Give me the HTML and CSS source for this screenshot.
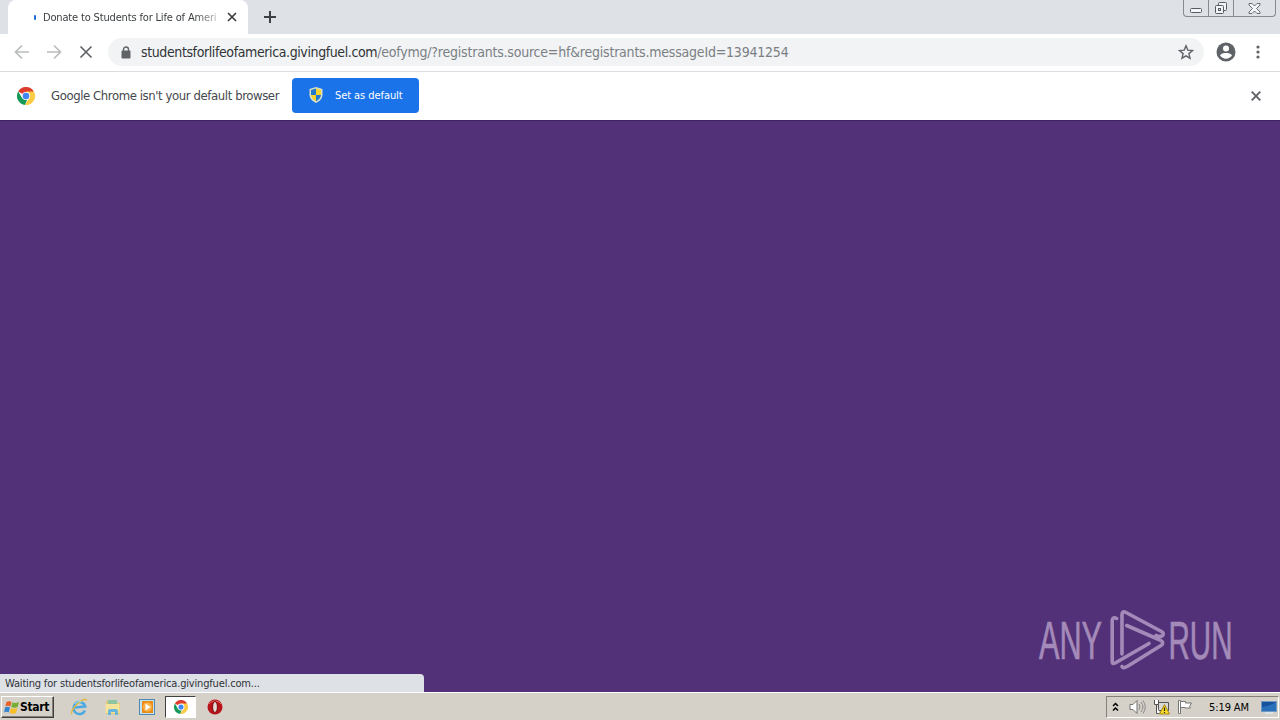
FILE: index.html
```html
<!DOCTYPE html>
<html lang="en">
<head>
<meta charset="utf-8">
<title>Donate to Students for Life of America</title>
<link rel="stylesheet" href="styles.css">
</head>
<body>
<div class="screen">
  <header class="tabstrip">
    <div class="tab">
      <i class="spinner"></i>
      <span class="tab-title">Donate to Students for Life of Ameri</span>
      <svg class="tab-close" width="10" height="10" viewBox="0 0 10 10"><path d="M1 1l8 8M9 1l-8 8" stroke="#3c4043" stroke-width="1.7"/></svg>
    </div>
    <svg class="new-tab" width="12" height="12" viewBox="0 0 12 12"><path d="M6 0v12M0 6h12" stroke="#3c4043" stroke-width="2"/></svg>
    <div class="caption-buttons">
      <span class="cap min"><svg width="12" height="5" viewBox="0 0 12 5"><rect x=".5" y=".5" width="11" height="4" rx="1" fill="#f5f6f8" stroke="#555b63"/></svg></span>
      <span class="cap restore"><svg width="14" height="14" viewBox="0 0 14 14"><g fill="#f2f3f5" stroke="#555b63"><rect x="4.500" y="1.500" width="8" height="8" rx="1"/><rect x="1.500" y="4.500" width="8" height="8" rx="1"/><rect x="4.500" y="7.500" width="2" height="2"/></g></svg></span>
      <span class="cap close"><svg width="13" height="11" viewBox="0 0 13 11"><path d="M1 .5h3l2.500 2.500L9 .5h3v1.500L8.500 5.500 12 9v1.500H9L6.500 8 4 10.500H1V9l3.500-3.500L1 2z" fill="#f5f6f8" stroke="#666c74"/></svg></span>
    </div>
  </header>

  <nav class="toolbar">
    <svg class="nav-icon" width="16" height="16" viewBox="0 0 16 16"><path d="M15 8H2M8 1.500L1.500 8 8 14.500" fill="none" stroke="#babcbe" stroke-width="1.700"/></svg>
    <svg class="nav-icon" width="16" height="16" viewBox="0 0 16 16"><path d="M1 8h13M8 1.500L14.500 8 8 14.500" fill="none" stroke="#babcbe" stroke-width="1.700"/></svg>
    <svg class="nav-icon" width="16" height="16" viewBox="0 0 16 16"><path d="M2.500 2.500l11 11M13.500 2.500l-11 11" stroke="#5f6368" stroke-width="1.700"/></svg>
    <div class="omnibox">
      <svg class="lock" width="10" height="13" viewBox="0 0 10 13"><path d="M2.500 6V3.500a2.500 2.500 0 0 1 5 0V6" fill="none" stroke="#5f6368" stroke-width="1.400"/><rect x=".5" y="4.500" width="9" height="8" rx="1" fill="#5f6368"/></svg>
      <span class="url"><span class="host">studentsforlifeofamerica.givingfuel.com</span><span class="path">/eofymg/?registrants.source=hf&amp;registrants.messageId=13941254</span></span>
      <svg class="star" width="16" height="16" viewBox="0 0 16 16"><path d="M8 1.800l1.800 4.300 4.700.4-3.600 3.100 1.100 4.600L8 11.800l-4 2.400 1.100-4.600L1.500 6.500l4.700-.4z" fill="none" stroke="#5f6368" stroke-width="1.400"/></svg>
    </div>
    <svg class="avatar" width="20" height="20" viewBox="0 0 20 20"><circle cx="10" cy="10" r="9.500" fill="#5f6368"/><circle cx="10" cy="6.500" r="3" fill="#fff"/><path d="M4 13.500c1-2 3.500-2.500 6-2.500s5 .5 6 2.500c-1.300 2-3.500 3.200-6 3.200s-4.700-1.200-6-3.200z" fill="#fff"/></svg>
    <svg class="menu" width="4" height="14" viewBox="0 0 4 14"><g fill="#5f6368"><circle cx="2" cy="2" r="1.600"/><circle cx="2" cy="7" r="1.600"/><circle cx="2" cy="12" r="1.600"/></g></svg>
  </nav>

  <section class="infobar">
    <svg class="chrome" width="18" height="18" viewBox="0 0 18 18"><path d="M1.200 4.500A9 9 0 0 1 16.800 4.500L9 9z" fill="#dd3b2d"/><path d="M1.200 4.500L5.300 11.500 9 9l1 4-2 5A9 9 0 0 1 1.200 4.500z" fill="#159957"/><path d="M16.800 4.500A9 9 0 0 1 8 18l4.200-7L9 9V4.500z" fill="#fbcb43"/><circle cx="9" cy="9" r="4.100" fill="#fff"/><circle cx="9" cy="9" r="3.300" fill="#4285f4"/></svg>
    <span class="info-text">Google Chrome isn't your default browser</span>
    <button class="set-default">
      <svg width="14" height="16" viewBox="0 0 14 16"><path d="M7 0l6.500 2v5.500C13.500 11.500 10.500 14.500 7 16 3.500 14.500.5 11.500.5 7.500V2z" fill="#d8dfc9"/><path d="M7 1.500V8H2V3z" fill="#2379ce"/><path d="M7 1.500L12 3v5H7z" fill="#f6d32f"/><path d="M2 8h5v6.300C4 12.800 2.200 10.500 2 8z" fill="#f6d32f"/><path d="M7 8h5c-.2 2.500-2 4.800-5 6.300z" fill="#2379ce"/></svg>
      <span>Set as default</span>
    </button>
    <svg class="info-close" width="10" height="10" viewBox="0 0 10 10"><path d="M.7.7l8.600 8.600M9.300.7L.7 9.300" stroke="#5f6368" stroke-width="1.900"/></svg>
  </section>

  <main class="page">
    <div class="status"><span>Waiting for studentsforlifeofamerica.givingfuel.com...</span></div>
    <svg class="watermark" width="204" height="64" viewBox="0 0 204 64">
      <g class="mark-text"><text x="4" y="51" textLength="63" lengthAdjust="spacingAndGlyphs">ANY</text><text x="133.500" y="51" textLength="64" lengthAdjust="spacingAndGlyphs">RUN</text></g>
      <g fill="none" stroke="#a48ab9" stroke-width="3.600" stroke-linecap="round" stroke-linejoin="round"><path d="M81.700 10.500q-4-2-4.500 2v41q0 3 3 1.500L114 35.500"/><path d="M87 46V6.500q0-4 4-2l35.500 19q3 2 1 4-2 2-6.500 0"/><path d="M91.700 17.500L125 32q5 2.500 1 5.500L93 58q-5 3-6 .5"/></g>
    </svg>
  </main>

  <footer class="taskbar">
    <button class="start"><svg width="16" height="15" viewBox="0 0 16 15"><path d="M2.500 2Q5 .5 7.500 2L6.300 6.500Q4 5 1.300 6.500z" fill="#e76025"/><path d="M8.500 2.300Q11 4 15 2L13.600 7Q10 8.500 7.300 6.800z" fill="#76af32"/><path d="M1 7.500Q3.500 6 6 7.500L4.700 12.500Q2 11 0 12.500z" fill="#3484ce"/><path d="M7 8Q10 9.500 13.300 8L12 13Q8.500 14.500 5.700 13z" fill="#f6bf25"/></svg><span>Start</span></button>
    <span class="app"><svg width="18" height="18" viewBox="0 0 18 18"><path d="M15 12.500A6 6 0 1 1 15.300 8.500L5 9.500" fill="none" stroke="#49a9e0" stroke-width="2.500"/><path d="M2 16C-1 13 12-1 17 2" fill="none" stroke="#e4b83b" stroke-width="1.400"/><path d="M5 6q3-4 7-2" stroke="#9be0fa" fill="none"/></svg></span>
    <span class="app"><svg width="18" height="18" viewBox="0 0 18 18"><path d="M2 3h5l1 2h8v11H2z" fill="#e3c774"/><path d="M4 2h9v5H4z" fill="#8cc5a0"/><path d="M1.500 6h14v9h-14z" fill="#f6e49c"/><path d="M4 17v-4q0-2 2-2h6q2 0 2 2v4h-3v-3H7v3z" fill="#69b6dd"/></svg></span>
    <span class="app"><svg width="18" height="18" viewBox="0 0 18 18"><rect x="1.500" y="1.500" width="15" height="15" fill="#c1e2f2" stroke="#5089b2"/><rect x="4" y="3" width="11" height="12" fill="#ee8b18"/><circle cx="9.500" cy="9" r="4.500" fill="#f9b34d"/><path d="M7.500 5.500v7l5-3.500z" fill="#fff"/></svg></span>
    <span class="app active"><svg width="14" height="14" viewBox="0 0 18 18"><path d="M1.200 4.500A9 9 0 0 1 16.800 4.500L9 9z" fill="#dd3b2d"/><path d="M1.200 4.500L5.300 11.500 9 9l1 4-2 5A9 9 0 0 1 1.200 4.500z" fill="#159957"/><path d="M16.800 4.500A9 9 0 0 1 8 18l4.200-7L9 9V4.500z" fill="#fbcb43"/><circle cx="9" cy="9" r="4.400" fill="#fff"/><circle cx="9" cy="9" r="3.300" fill="#4285f4"/></svg></span>
    <span class="app"><svg width="16" height="16" viewBox="0 0 16 16"><circle cx="8" cy="8" r="7.500" fill="#b81319"/><path d="M2 5a7 6 0 0 1 12 0" stroke="#e76a64" fill="none"/><ellipse cx="8" cy="8" rx="2.400" ry="5.500" fill="#e7dcd5" stroke="#77090d"/></svg></span>
    <div class="tray">
      <svg class="chevrons" width="7" height="10" viewBox="0 0 7 10"><path d="M1 4l2.500-2.500L6 4M1 8.500L3.500 6 6 8.500" fill="none" stroke="#000" stroke-width="1.500"/></svg>
      <svg width="17" height="16" viewBox="0 0 17 16"><path d="M1 5.500h3l4-4v13l-4-4H1z" fill="#fff" stroke="#737373"/><path d="M10 5q2 3 0 6M12 3q4 5 0 10M14 1.500q4.500 6.500 0 13" fill="none" stroke="#8b8b8b"/></svg>
      <svg class="network" width="17" height="16" viewBox="0 0 17 16"><path d="M5.500 3.500h10v8h-10z" fill="#d9d9d3" stroke="#555"/><path d="M7 13.500h6" stroke="#555"/><path d="M1.500 1v4.500h4V1M3.500 5.500v9h3" fill="#fff" stroke="#555"/><path d="M11.500 5.500L16.500 15h-10z" fill="#fbdc25" stroke="#a48718"/><path d="M11.500 8.500v3.500M11.500 13v1" stroke="#222" stroke-width="1.200"/></svg>
      <svg class="flag" width="17" height="16" viewBox="0 0 17 16"><path d="M1.500 1.500h2v13h-2z" fill="#fff" stroke="#777"/><path d="M3.500 2.500h5V4h6l-2 3.500 1 1.500H8V8.500H3.500z" fill="#fff" stroke="#777"/></svg>
      <span class="clock">5:19 AM</span>
      <svg width="16" height="14" viewBox="0 0 16 14"><rect x=".5" y="1.500" width="15" height="10" fill="#17529d" stroke="#739bc2"/><path d="M1 7q8-1 14-5v9H1z" fill="#2871ba"/><path d="M4 13h8" stroke="#dce9f3" stroke-width="1.500"/></svg>
    </div>
  </footer>
</div>
</body>
</html>
```
FILE: styles.css
```css
* { box-sizing: border-box; }
body { margin: 0; overflow: hidden; font-family: "DejaVu Sans Condensed", "DejaVu Sans", sans-serif; font-stretch: condensed; }
svg { display: block; flex: none; }
button { font: inherit; border: 0; padding: 0; display: flex; align-items: center; }
.screen { width: 1280px; height: 720px; display: flex; flex-direction: column; background: #fff; }
.tabstrip { height: 34px; flex: none; display: flex; background: #dee1e6; padding-left: 8px; }
.tab { width: 240px; height: 34px; background: #fff; border-radius: 8px 8px 0 0; display: flex; align-items: center; padding-left: 26px; }
.spinner { width: 2px; height: 5px; background: #1a6ad9; border-radius: 1px; margin-right: 7px; }
.tab-title { width: 176px; white-space: nowrap; font-size: 11px; letter-spacing: -.16px; color: #3c4043; -webkit-mask-image: linear-gradient(90deg, #000 152px, rgba(0,0,0,.25) 176px); }
.tab-close { margin-left: 8px; }
.new-tab { margin: 11px 0 0 16px; }
.caption-buttons { margin-left: auto; margin-right: 4px; width: 93px; height: 17px; display: flex; border: 1px solid #858a93; border-top: 0; border-radius: 0 0 4px 4px; }
.cap { display: flex; align-items: center; justify-content: center; }
.min { width: 24px; padding-top: 4px; }
.restore { width: 26px; border-left: 1px solid #858a93; border-right: 1px solid #858a93; }
.close { flex: 1; }
.toolbar { height: 38px; flex: none; display: flex; align-items: center; padding: 0 20px 1px 14px; border-bottom: 1px solid #dadce0; }
.nav-icon { margin-right: 16px; }
.omnibox { width: 1096px; height: 28px; margin-left: -2px; border-radius: 14px; background: #f1f3f4; display: flex; align-items: center; padding: 0 10px 0 13px; }
.url { margin-left: 10px; font-size: 14px; color: #7b8085; white-space: nowrap; }
.host { color: #303338; letter-spacing: -.39px; }
.path { letter-spacing: -.21px; }
.star { margin-left: auto; }
.avatar { margin-left: 12px; }
.menu { margin-left: 20px; }
.infobar { height: 48px; flex: none; display: flex; align-items: center; padding: 0 19px 0 17px; }
.info-text { margin-left: 16px; width: 229px; padding-bottom: 2px; white-space: nowrap; font-size: 13px; letter-spacing: -.41px; color: #45484c; }
.set-default { margin: 0 0 2px 12px; width: 127px; height: 35px; border-radius: 4px; background: #1a73e8; color: #fff; font-size: 11px; letter-spacing: -.07px; padding-left: 17px; white-space: nowrap; }
.set-default span { margin-left: 12px; }
.info-close { margin-left: auto; }
.page { flex: 1; display: flex; align-items: flex-end; background: #523178; border-top: 1px solid #3c2361; }
.status { width: 424px; height: 18px; background: #dee1e6; border-radius: 0 4px 0 0; font-size: 11px; line-height: 18px; padding: 1px 0 0 5px; color: #303338; white-space: nowrap; letter-spacing: -.17px; }
.watermark { margin-left: auto; margin-right: 41px; margin-bottom: 20px; }
.mark-text { font: 53px "Liberation Sans", sans-serif; fill: #a48ab9; stroke: #a48ab9; stroke-width: .7px; }
.taskbar { height: 28px; flex: none; border-top: 1px solid #fff; background: #d5d0c8; display: flex; align-items: center; padding: 1px 1px 0 1px; }
.start { width: 53px; height: 22px; padding-left: 2px; background: #d5d0c8; border: 1px solid; border-color: #fff #404040 #404040 #fff; box-shadow: inset -1px -1px #85817a; font-size: 12px; font-weight: bold; letter-spacing: -.35px; color: #000; white-space: nowrap; margin-right: 8px; }
.app { width: 34px; height: 22px; display: flex; align-items: center; justify-content: center; }
.active { width: 31px; margin: 0 2px 0 1px; background: #fff; border: 1px solid; border-color: #404040 #fff #fff #404040; }
.tray { width: 173px; height: 22px; margin-left: auto; border: 1px solid; border-color: #85817a #fff #fff #85817a; display: flex; align-items: center; padding-left: 5px; }
.chevrons { margin-right: 10px; }
.network { margin-left: 7px; }
.flag { margin-left: 7px; }
.clock { margin: 0 10px 0 15px; width: 42px; font-size: 11px; letter-spacing: -.1px; white-space: nowrap; color: #000; }
```
